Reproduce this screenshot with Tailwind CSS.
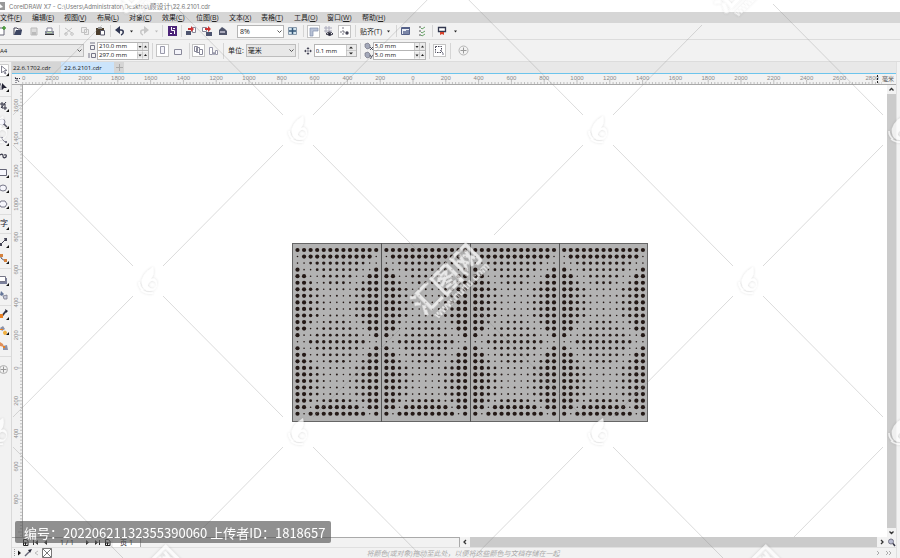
<!DOCTYPE html>
<html lang="zh-CN">
<head>
  <meta charset="UTF-8" />
  <title>CorelDRAW X7</title>
  <script src="https://cdn.jsdelivr.net/npm/@tailwindcss/browser@4"></script>
</head>
<body class="relative h-screen flex flex-col overflow-hidden bg-white text-[#333] text-[7px] leading-none font-['Open_Sans','Noto_Sans_CJK_SC',sans-serif]">

  <!-- title bar -->
  <header class="h-3 shrink-0 flex items-center gap-1 bg-white text-[#777] whitespace-nowrap">
    <svg class="w-[5px] h-2" viewBox="0 0 5 8"><path d="M0 0h5v8H0z" fill="#999" /><path d="M0 2l3 3-3 1z" fill="#fff" /></svg>
    <h1 class="text-[6px] font-['Inter','Noto_Sans_CJK_SC',sans-serif]">CorelDRAW X7 - C:\Users\Administrator\Desktop\<span class="text-[7px]">顾设计</span>\22.6.2101.cdr</h1>
  </header>

  <!-- menu -->
  <nav class="h-[11px] shrink-0 flex items-center bg-[#d6d6d6] text-[#222] whitespace-nowrap">
    <button class="w-8 text-left">文件(<u>F</u>)</button>
    <button class="w-8 text-left">编辑(<u>E</u>)</button>
    <button class="w-[33px] text-left">视图(<u>V</u>)</button>
    <button class="w-8 text-left">布局(<u>L</u>)</button>
    <button class="w-[33px] text-left">对象(<u>C</u>)</button>
    <button class="w-[34px] text-left">效果(<u>C</u>)</button>
    <button class="w-[33px] text-left">位图(<u>B</u>)</button>
    <button class="w-8 text-left">文本(<u>X</u>)</button>
    <button class="w-[33px] text-left">表格(<u>T</u>)</button>
    <button class="w-[33px] text-left">工具(<u>O</u>)</button>
    <button class="w-[35px] text-left">窗口(<u>W</u>)</button>
    <button class="w-8 text-left">帮助(<u>H</u>)</button>
  </nav>

  <!-- standard toolbar -->
  <div class="h-[17px] shrink-0 flex items-center bg-[#f2f2f2] border-b border-[#dcdcdc]">
    <button aria-label="新建" class="w-[10px] h-4 shrink-0"><svg class="w-[10px] h-4" viewBox="0 0 10 16"><path d="M0 5h4v7H0" fill="#fff" stroke="#667" /><path d="M4 3v4M2 5h4" stroke="#4a9a3c" stroke-width="1.6" /></svg></button>
    <button aria-label="打开" class="w-4 h-4 shrink-0"><svg class="w-4 h-4" viewBox="0 0 16 16"><path d="M4 12V5h3l1 1h3v2" fill="#fff" stroke="#445" /><path d="M4 12l2-5h6l-1 5z" fill="#3d4663" /></svg></button>
    <button aria-label="保存" class="w-4 h-4 shrink-0"><svg class="w-4 h-4" viewBox="0 0 16 16"><path d="M5 5h6v7H5z" fill="#ddd" stroke="#bbb" /><path d="M6 9h4v3H6z" fill="#bbb" /></svg></button>
    <button aria-label="打印" class="w-4 h-4 shrink-0"><svg class="w-4 h-4" viewBox="0 0 16 16"><path d="M5 8V5h5v3" fill="#fff" stroke="#889" /><path d="M3 8h9v4H3z" fill="#8a8f9b" /><path d="M3 11h9v1H3z" fill="#333" /><path d="M5 9h5v1H5z" fill="#b9d3a8" /></svg></button>
    <i class="w-px h-3 mx-px bg-[#d5d5d5]"></i>
    <button aria-label="剪切" class="w-4 h-4 shrink-0"><svg class="w-4 h-4" viewBox="0 0 16 16" fill="none" stroke="#c3c3c3"><path d="M4 5l7 5M4 11l7-6" /><circle cx="11" cy="11" r="1.3" /><circle cx="5" cy="11" r="1.3" /></svg></button>
    <button aria-label="复制" class="w-4 h-4 shrink-0"><svg class="w-4 h-4" viewBox="0 0 16 16" fill="#eee" stroke="#c3c3c3"><path d="M4.500 4.500h5v5h-5zM7.500 6.500h4v5h-4z" /></svg></button>
    <button aria-label="粘贴" class="w-4 h-4 shrink-0"><svg class="w-4 h-4" viewBox="0 0 16 16"><path d="M3 5h8v7H3z" fill="#4b3d2c" /><path d="M5 4h4v2H5z" fill="#999" /><path d="M7.500 7.500h4v4.500h-4z" fill="#fff" stroke="#556" /></svg></button>
    <i class="w-px h-3 mx-px bg-[#d5d5d5]"></i>
    <button aria-label="撤消" class="w-4 h-4 shrink-0"><svg class="w-4 h-4" viewBox="0 0 16 16" fill="none" stroke="#2f3652"><path d="M6 7h3c3 0 3 4 0 5" stroke-width="1.500" /><path d="M8 3L3 7l5 4z" fill="#2f3652" stroke="none" /></svg></button>
    <button aria-label="撤消列表" class="w-[7px] h-4 shrink-0"><svg class="w-[7px] h-4" viewBox="0 0 7 16"><path d="M2 7.500h3L3.500 9.500z" fill="#222" /></svg></button>
    <button aria-label="重做" class="w-[18px] h-4 shrink-0"><svg class="w-[18px] h-4" viewBox="0 0 18 16" fill="none" stroke="#c6c6c6"><path d="M10 7H8c-3 0-3 4 0 5" stroke-width="1.500" /><path d="M9 3l5 4-5 4z" fill="#c6c6c6" stroke="none" /></svg></button>
    <button aria-label="重做列表" class="w-[7px] h-4 shrink-0"><svg class="w-[7px] h-4" viewBox="0 0 7 16"><path d="M2 7.500h3L3.500 9.500z" fill="#bbb" /></svg></button>
    <i class="w-px h-3 ml-[2px] mr-px bg-[#d5d5d5]"></i>
    <button aria-label="搜索内容" class="w-4 h-4 shrink-0"><svg class="w-4 h-4" viewBox="0 0 16 16"><path d="M4 3h9v10H4z" fill="#4c2479" /><path d="M7.500 4v3.500h3V11M11 5.500H9M6 10.500h2" fill="none" stroke="#fff" /></svg></button>
    <i class="w-px h-3 mx-px bg-[#d5d5d5]"></i>
    <button aria-label="导入" class="w-4 h-4 shrink-0"><svg class="w-4 h-4" viewBox="0 0 16 16"><path d="M3 8h5v4H3z" fill="#4d546f" /><path d="M9.500 4.500h3v5h-3z" fill="#fff" stroke="#889" /><path d="M5 5h3V3l3 3-3 3V7H5z" fill="#c33" /></svg></button>
    <button aria-label="导出" class="w-4 h-4 shrink-0"><svg class="w-4 h-4" viewBox="0 0 16 16"><path d="M7 9h6v4H7z" fill="#4d546f" /><path d="M3.500 4.500h4v4h-4z" fill="#fff" stroke="#889" /><path d="M6 5h3V3l3 3-3 3V7H6z" fill="#c33" /></svg></button>
    <button aria-label="发布为PDF" class="w-4 h-4 shrink-0"><svg class="w-4 h-4" viewBox="0 0 16 16"><path d="M4 7l3-3 3 2 2 2v4H4z" fill="#50556b" /><path d="M5 8h5v2H5z" fill="#aab" /></svg></button>
    <label class="relative ml-[6px] w-[47px] h-[13px] shrink-0">
      <select aria-label="缩放级别" class="block appearance-none w-full h-full pl-[2px] bg-white border border-[#b5b5b5] text-[#222]"><option>8%</option></select>
      <svg class="absolute right-[2px] top-[4px] w-[5px] h-[5px]" viewBox="0 0 5 5" fill="none" stroke="#555"><path d="M.5 1.500l2 2 2-2" /></svg>
    </label>
    <button aria-label="全屏预览" class="w-4 h-4 shrink-0"><svg class="w-4 h-4" viewBox="0 0 16 16"><path d="M4.500 4.500h8v7h-8z" fill="#d5e5ee" stroke="#89a" /><path d="M8.500 5v6M5 8h7" stroke="#357" stroke-width="1.500" /></svg></button>
    <i class="w-px h-3 mx-[3px] bg-[#d5d5d5]"></i>
    <button aria-label="显示标尺" class="w-[13px] h-[13px] shrink-0 bg-white border border-[#c4c4c4]"><svg class="w-[11px] h-[11px]" viewBox="0 0 11 11"><path d="M2 2h8v3H5v5H2z" fill="#b8c2d6" stroke="#8290ad" stroke-width=".7" /></svg></button>
    <button aria-label="显示网格" class="w-[18px] h-4 shrink-0"><svg class="w-[18px] h-4" viewBox="0 0 18 16"><path d="M4 5h8M4 8h8M6 3v7M9 3v7" stroke="#aab" /><path d="M6 11q4-4 7 0-3 3-7 0z" fill="#fff" stroke="#334" /><circle cx="9.500" cy="11" r="1.500" fill="#223" /></svg></button>
    <button aria-label="显示辅助线" class="w-[13px] h-[13px] shrink-0 bg-white border border-[#c4c4c4]"><svg class="w-[11px] h-[11px]" viewBox="0 0 11 11"><path d="M4 1v9M1 6h5" stroke="#556" stroke-width=".8" stroke-dasharray="2 1" /><circle cx="8" cy="7" r="1.700" fill="#445" /></svg></button>
    <i class="w-px h-3 mx-1 bg-[#d5d5d5]"></i>
    <button class="h-4 shrink-0 whitespace-nowrap text-[#222]">贴齐(T)</button>
    <button aria-label="贴齐列表" class="w-[7px] h-4 ml-[3px] shrink-0"><svg class="w-[7px] h-4" viewBox="0 0 7 16"><path d="M2 7.500h3L3.500 9.500z" fill="#222" /></svg></button>
    <i class="w-px h-3 ml-1 mr-px bg-[#d5d5d5]"></i>
    <button aria-label="选项" class="w-4 h-4 shrink-0"><svg class="w-4 h-4" viewBox="0 0 16 16"><path d="M3.500 4.500h8v7h-8z" fill="#e8ecf5" stroke="#556188" /><path d="M4 4h8v2H4z" fill="#556188" /><path d="M5 8h3v3H5zM8 7h3v4H8z" fill="#7b86a8" /></svg></button>
    <button aria-label="选项列表" class="w-4 h-4 shrink-0"><svg class="w-4 h-4" viewBox="0 0 16 16" fill="none"><path d="M5 4h2M5 8h2M5 12h2" stroke="#555" /><path d="M7 5l1 1 3-2M7 9l1 1 3-2M7 12l1 1 3-2" stroke="#6aa36a" /></svg></button>
    <i class="w-px h-3 mx-[2px] bg-[#d5d5d5]"></i>
    <button aria-label="应用程序启动器" class="w-4 h-4 shrink-0"><svg class="w-4 h-4" viewBox="0 0 16 16"><path d="M3.500 4.500h7v4h-7z" fill="#fff" stroke="#33384f" stroke-width="1.300" /><path d="M5 9h4v3L7 11l-2 1z" fill="#d8432b" /></svg></button>
    <button aria-label="启动器列表" class="w-[7px] h-4 ml-px shrink-0"><svg class="w-[7px] h-4" viewBox="0 0 7 16"><path d="M2 7.500h3L3.500 9.500z" fill="#222" /></svg></button>
  </div>

  <!-- property bar -->
  <div class="h-[22px] shrink-0 flex items-center bg-[#f2f2f2] border-b border-[#dcdcdc]">
    <label class="relative w-[84px] h-[13px] shrink-0">
      <select aria-label="页面大小" class="block appearance-none w-full h-full bg-[#e8e8e8] border border-l-0 border-[#bdbdbd] text-[6px] text-[#222]"><option>A4</option></select>
      <svg class="absolute right-[2px] top-[4px] w-[5px] h-[5px]" viewBox="0 0 5 5" fill="none" stroke="#555"><path d="M.5 1.500l2 2 2-2" /></svg>
    </label>
    <svg class="ml-1 w-2 h-[18px] shrink-0" viewBox="0 0 8 18" fill="none" stroke="#778"><path d="M2.500 3.500h4v4h-4zM2 1h5M3.500 11.500h4v4h-4zM1 11v5" /></svg>
    <div class="ml-px w-[52px] shrink-0 flex flex-col">
      <div class="h-[9px] flex border border-[#b5b5b5] bg-white">
        <input aria-label="页面宽度" value="210.0 mm" class="min-w-0 flex-1 pl-px text-[6px] text-[#111]" />
        <svg class="w-[11px] h-[7px]" viewBox="0 0 11 7"><path d="M0 0h11v7H0z" fill="#eaeaea" /><path d="M5.500 0v7M.5 0v7" stroke="#bbb" stroke-width=".7" /><path d="M1.500 3h3L3 5zM7 4.500h3l-1.500-2z" fill="#222" /></svg>
      </div>
      <div class="h-[9px] flex border border-t-0 border-[#b5b5b5] bg-white">
        <input aria-label="页面高度" value="297.0 mm" class="min-w-0 flex-1 pl-px text-[6px] text-[#111]" />
        <svg class="w-[11px] h-[8px]" viewBox="0 0 11 7"><path d="M0 0h11v7H0z" fill="#eaeaea" /><path d="M5.500 0v7M.5 0v7" stroke="#bbb" stroke-width=".7" /><path d="M1.500 3h3L3 5zM7 4.500h3l-1.500-2z" fill="#222" /></svg>
      </div>
    </div>
    <i class="w-px h-4 mx-[3px] bg-[#d5d5d5]"></i>
    <button aria-label="纵向" class="w-[13px] h-[13px] shrink-0 bg-white border border-[#c4c4c4]"><svg class="w-[11px] h-[11px]" viewBox="0 0 11 11"><path d="M3.500 1.500h4v7h-4z" fill="#f4f4fa" stroke="#99a" /></svg></button>
    <button aria-label="横向" class="w-[18px] h-4 shrink-0"><svg class="w-[18px] h-4" viewBox="0 0 18 16"><path d="M5.500 6.500h7v5h-7z" fill="#f4f4fa" stroke="#889" /></svg></button>
    <i class="w-px h-4 mx-[2px] bg-[#d5d5d5]"></i>
    <button aria-label="所有页面" class="w-[13px] h-[13px] shrink-0 bg-white border border-[#c4c4c4]"><svg class="w-[11px] h-[11px]" viewBox="0 0 11 11" fill="#fff" stroke="#889"><path d="M1.500 1.500h3v5h-3zM3.500 2.500h3v5h-3zM6.500 4.500h3v5h-3z" /></svg></button>
    <button aria-label="当前页" class="w-[17px] h-4 shrink-0"><svg class="w-[17px] h-4" viewBox="0 0 17 16" fill="#fff" stroke="#99a"><path d="M4.500 4.500h3v7h-3zM8.500 9.500h1v2h-1zM10.500 7.500h2v4h-2z" /></svg></button>
    <i class="w-px h-4 mx-px bg-[#d5d5d5]"></i>
    <label for="unit" class="ml-[3px] shrink-0 whitespace-nowrap text-[#222]">单位:</label>
    <div class="relative ml-[2px] w-[50px] h-[13px] shrink-0">
      <select id="unit" class="block appearance-none w-full h-full pl-px bg-[#e8e8e8] border border-[#bdbdbd] text-[#222]"><option>毫米</option></select>
      <svg class="absolute right-[2px] top-[4px] w-[5px] h-[5px]" viewBox="0 0 5 5" fill="none" stroke="#555"><path d="M.5 1.500l2 2 2-2" /></svg>
    </div>
    <i class="w-px h-4 ml-[2px] mr-[5px] bg-[#d5d5d5]"></i>
    <svg class="w-2 h-2 shrink-0" viewBox="0 0 8 8" fill="#445"><path d="M4 0l1.500 2h-3zM4 8l1.500-2h-3zM0 4l2-1.500v3zM8 4L6 2.500v3z" /><path d="M3 3h2v2H3z" fill="none" stroke="#778" stroke-width=".7" /></svg>
    <div class="ml-[2px] w-[43px] h-[13px] shrink-0 flex border border-[#b5b5b5] bg-white">
      <input aria-label="微调距离" value="0.1 mm" class="min-w-0 flex-1 pl-px text-[6px] text-[#111]" />
      <svg class="w-[10px] h-[11px]" viewBox="0 0 10 11"><path d="M0 0h10v11H0z" fill="#eaeaea" /><path d="M0 5.500h10M.5 0v11" stroke="#bbb" stroke-width=".7" /><path d="M3 3.500h4L5 1.500zM3 7.500h4l-2 2z" fill="#222" /></svg>
    </div>
    <i class="w-px h-4 mx-[3px] bg-[#d5d5d5]"></i>
    <svg class="w-[9px] h-[18px] shrink-0" viewBox="0 0 9 18"><path d="M1 2l3-1 2 2v3L3 7 1 5zM1 11l3-1 2 2v3l-3 1-2-2z" fill="#a4a9ba" stroke="#667" stroke-width=".6" /><path d="M6 5l3 3M9 5L6 8M6 13l1.500 2L9 13M7.500 15l-1 2" stroke="#334" stroke-width=".8" fill="none" /></svg>
    <div class="w-[53px] shrink-0 flex flex-col">
      <div class="h-[9px] flex border border-[#b5b5b5] bg-white">
        <input aria-label="再制距离 X" value="5.0 mm" class="min-w-0 flex-1 pl-px text-[6px] text-[#111]" />
        <svg class="w-[11px] h-[7px]" viewBox="0 0 11 7"><path d="M0 0h11v7H0z" fill="#eaeaea" /><path d="M5.500 0v7M.5 0v7" stroke="#bbb" stroke-width=".7" /><path d="M1.500 3h3L3 5zM7 4.500h3l-1.500-2z" fill="#222" /></svg>
      </div>
      <div class="h-[9px] flex border border-t-0 border-[#b5b5b5] bg-white">
        <input aria-label="再制距离 Y" value="5.0 mm" class="min-w-0 flex-1 pl-px text-[6px] text-[#111]" />
        <svg class="w-[11px] h-[8px]" viewBox="0 0 11 7"><path d="M0 0h11v7H0z" fill="#eaeaea" /><path d="M5.500 0v7M.5 0v7" stroke="#bbb" stroke-width=".7" /><path d="M1.500 3h3L3 5zM7 4.500h3l-1.500-2z" fill="#222" /></svg>
      </div>
    </div>
    <i class="w-px h-4 mx-[3px] bg-[#d5d5d5]"></i>
    <button aria-label="视为已填充" class="w-[13px] h-[13px] shrink-0 bg-white border border-[#c4c4c4]"><svg class="w-[11px] h-[11px]" viewBox="0 0 11 11" fill="none" stroke="#445"><path d="M1.500 1.500h6v6h-6z" stroke-dasharray="1.500 1" /><path d="M6 5l3 3v2" stroke="#778" /></svg></button>
    <i class="w-px h-4 ml-1 mr-[7px] bg-[#d5d5d5]"></i>
    <button aria-label="快速自定义" class="w-[11px] h-[11px] shrink-0"><svg class="w-[11px] h-[11px]" viewBox="0 0 11 11" fill="none" stroke="#b5b5b5"><circle cx="5.500" cy="5.500" r="4.500" /><path d="M5.500 2.500v6M2.500 5.500h6" stroke="#999" /></svg></button>
  </div>

  <div class="flex-1 min-h-0 flex">

    <!-- toolbox -->
    <aside class="w-3 shrink-0 flex flex-col bg-[#f2f2f2] border-r border-[#d9d9d9]">
      <button aria-label="选择" class="h-4"><svg class="w-[11px] h-4" viewBox="0 0 11 16"><path d="M-1 2.500h9.500v12H-1z" fill="#fff" stroke="#ccc" /><path d="M1.500 4v7l2-2 1.500 3 1-.5-1.500-3H7z" fill="#fff" stroke="#667" stroke-width=".8" /><path d="M9 11v3H6z" fill="#111" /></svg></button>
      <button aria-label="形状" class="h-4"><svg class="w-[11px] h-4" viewBox="0 0 11 16"><path d="M0 5q2 3 1 7" fill="none" stroke="#667" /><path d="M2 5l5 5H4l-2 2z" fill="#223" /><path d="M9 11v3H6z" fill="#111" /></svg></button>
      <i class="h-[3px] border-b border-[#ddd]"></i>
      <button aria-label="裁剪" class="h-[17px]"><svg class="w-[11px] h-4" viewBox="0 0 11 16"><path d="M0 6h5v6M2 4v6h5M6 4L1 10" fill="none" stroke="#334" /><path d="M9 11v3H6z" fill="#111" /></svg></button>
      <button aria-label="缩放" class="h-[17px]"><svg class="w-[11px] h-4" viewBox="0 0 11 16"><circle cx="2" cy="7" r="3" fill="#eef" stroke="#889" /><path d="M4 9l3 3" stroke="#556" stroke-width="1.500" /><path d="M9 11v3H6z" fill="#111" /></svg></button>
      <button aria-label="手绘" class="h-[17px]"><svg class="w-[11px] h-4" viewBox="0 0 11 16"><path d="M0 5l6 6" stroke="#889" /><path d="M1 5h2v2H1zM5 9h2v2H5z" fill="#778" /><path d="M9 11v3H6z" fill="#111" /></svg></button>
      <button aria-label="艺术笔" class="h-4"><svg class="w-[11px] h-4" viewBox="0 0 11 16"><path d="M0 7q3-2 3 1t3 1q1-3-2-2" fill="none" stroke="#334" stroke-width="1.200" /></svg></button>
      <button aria-label="矩形" class="h-4"><svg class="w-[11px] h-4" viewBox="0 0 11 16"><path d="M-1 5.500h7.500v6H-1z" fill="#f6f6fc" stroke="#667" /><path d="M9 11v3H6z" fill="#111" /></svg></button>
      <button aria-label="椭圆形" class="h-4"><svg class="w-[11px] h-4" viewBox="0 0 11 16"><ellipse cx="3" cy="8" rx="3.500" ry="3" fill="#f6f6fc" stroke="#778" /><path d="M9 10v3H6z" fill="#111" /></svg></button>
      <button aria-label="多边形" class="h-4"><svg class="w-[11px] h-4" viewBox="0 0 11 16"><path d="M1 5h4l2 3-2 3H1L-1 8z" fill="#f6f6fc" stroke="#778" /><path d="M9 10v3H6z" fill="#111" /></svg></button>
      <i class="h-[3px] border-b border-[#ddd]"></i>
      <button aria-label="文本" class="relative h-4 text-left text-[8px] text-[#223]">字<svg class="absolute right-0 bottom-0 w-[5px] h-[5px]" viewBox="0 0 5 5"><path d="M3 1v3H0z" fill="#111" /></svg></button>
      <i class="h-[3px] border-b border-[#ddd]"></i>
      <button aria-label="平行度量" class="h-4"><svg class="w-[11px] h-4" viewBox="0 0 11 16"><path d="M0 11l6-6" stroke="#445" /><path d="M0 9h2v3H0zM4 4h3v3H5z" fill="#445" /><path d="M9 11v3H6z" fill="#111" /></svg></button>
      <button aria-label="连接器" class="h-4"><svg class="w-[11px] h-4" viewBox="0 0 11 16"><path d="M1 5v3l4 3" fill="none" stroke="#556" /><path d="M0 4h3v3H0zM4 9h3v3H4z" fill="#d4813c" /><path d="M9 11v3H6z" fill="#111" /></svg></button>
      <i class="h-[3px] border-b border-[#ddd]"></i>
      <button aria-label="阴影" class="h-[17px]"><svg class="w-[11px] h-4" viewBox="0 0 11 16"><path d="M0 8h7v6H0z" fill="#7c819c" /><path d="M-1 6.500h6.500v5H-1z" fill="#fff" stroke="#778" /><path d="M9 13v3H6z" fill="#111" /></svg></button>
      <button aria-label="透明度" class="h-[17px]"><svg class="w-[11px] h-4" viewBox="0 0 11 16"><path d="M1 4l3 3-2 2-2-1z" fill="#667799" /><path d="M3 9l4-1v4H4z" fill="#c9cddd" stroke="#778" stroke-width=".8" /></svg></button>
      <i class="h-[3px] border-b border-[#ddd]"></i>
      <button aria-label="颜色滴管" class="h-4"><svg class="w-[11px] h-4" viewBox="0 0 11 16"><path d="M2 10l4-5" stroke="#334" stroke-width="2" /><path d="M5 3l3 2-2 2z" fill="#223" /><path d="M0 8h3v4H0z" fill="#e98022" /><path d="M9 11v3H6z" fill="#111" /></svg></button>
      <button aria-label="交互式填充" class="h-4"><svg class="w-[11px] h-4" viewBox="0 0 11 16"><path d="M0 6l3-2 2 3-3 2z" fill="#8b91a8" /><path d="M0 7h3v1H0z" fill="#e98022" /><path d="M3 10q2-3 4 0 0 3-2 3t-2-3z" fill="#f0b040" /><path d="M9 10v3H6z" fill="#111" /></svg></button>
      <button aria-label="智能填充" class="h-4"><svg class="w-[11px] h-4" viewBox="0 0 11 16"><path d="M0 4l3 2 1 3-4-1z" fill="#e0905a" /><path d="M3 8l4-1 1 5H3z" fill="#8b91a8" /><path d="M3 8h2v2H3z" fill="#e98022" /></svg></button>
      <i class="h-[3px] border-b border-[#ddd]"></i>
      <button aria-label="自定义工具箱" class="h-6 flex items-center"><svg class="w-[11px] h-[11px]" viewBox="0 0 11 11" fill="none" stroke="#b0b0b0"><circle cx="3.500" cy="5.500" r="4" /><path d="M3.500 2.500v6M.5 5.500h6" stroke="#999" /></svg></button>
    </aside>

    <main class="flex-1 min-w-0 flex flex-col">
      <!-- document tabs -->
      <div class="h-3 shrink-0 flex items-stretch bg-[#e8e8e8] border-b border-[#6cc4ec] text-[6px] text-[#111]">
        <button class="w-[49px] text-left pl-px bg-[#d5d5d5]">22.6.1702.cdr</button>
        <button class="w-[53px] text-left pl-[3px] bg-[#cbe4fb]">22.6.2101.cdr</button>
        <button aria-label="新建文档" class="w-[10px] bg-[#d5d5d5] flex items-center justify-center"><svg class="w-[7px] h-[7px]" viewBox="0 0 7 7" stroke="#aaa"><path d="M3.500 0v7M0 3.500h7" /></svg></button>
      </div>

      <!-- horizontal ruler -->
      <div class="h-[11px] shrink-0 flex bg-[#f2f2f2] border-b border-[#a9a9a9]">
        <svg class="w-[10px] h-[10px] shrink-0" viewBox="0 0 10 10" fill="none" stroke="#334"><path d="M4 4v5M3 4.500h5" stroke-dasharray="1 1" /><path d="M3 3l4 5" stroke-width=".7" /></svg>
        <svg id="rulerX" class="flex-1 min-w-0 h-[10px] text-[6px] font-['Liberation_Sans',sans-serif]"></svg>
        <span class="w-[14px] shrink-0 flex items-center text-[6px] text-[#555]">毫米</span>
      </div>

      <div class="flex-1 min-h-0 flex">
        <svg id="rulerY" class="w-[10px] h-full shrink-0 bg-[#f2f2f2] text-[6px] font-['Liberation_Sans',sans-serif]"></svg>
        <div class="relative flex-1 min-w-0 bg-white border-l border-[#a9a9a9] overflow-hidden">
          <svg id="art" class="absolute left-[269px] top-[158px] w-[357px] h-[180px]" viewBox="0 0 357 180"></svg>
        </div>
        <div class="w-[9px] shrink-0 flex flex-col bg-[#cbcbcb]">
          <button aria-label="向上滚动" class="h-[9px] bg-[#f2f2f2]"><svg class="w-[9px] h-[9px]" viewBox="0 0 9 9" fill="none" stroke="#333" stroke-width="1.300"><path d="M2.500 5.500l2-2 2 2" /></svg></button>
          <span class="flex-1"></span>
          <button aria-label="向下滚动" class="h-[9px] bg-[#f2f2f2]"><svg class="w-[9px] h-[9px]" viewBox="0 0 9 9" fill="none" stroke="#333" stroke-width="1.300"><path d="M2.500 3.500l2 2 2-2" /></svg></button>
        </div>
      </div>

      <!-- page navigator and horizontal scroll bar -->
      <div class="h-[10px] shrink-0 flex bg-[#f2f2f2]">
        <div class="w-[448px] shrink-0 flex items-center border-t border-r border-[#aaa] text-[#222]">
          <button aria-label="添加页" class="ml-[9px] w-[10px]"><svg class="w-[9px] h-[9px]" viewBox="0 0 9 9" fill="none" stroke="#222"><path d="M2.500 1.500h3l1.500 2v4H2.500zM3 5h3M4.500 4v3" /></svg></button>
          <button aria-label="第一页" class="w-[10px]"><svg class="w-[9px] h-[9px]" viewBox="0 0 9 9"><path d="M2 2h1v5H2zM7 2v5L4 4.500z" fill="#333" /></svg></button>
          <button aria-label="上一页" class="w-[10px]"><svg class="w-[9px] h-[9px]" viewBox="0 0 9 9"><path d="M6 2v5L3 4.500z" fill="#333" /></svg></button>
          <span class="w-[32px] text-center">1 / 1</span>
          <button aria-label="下一页" class="w-[10px]"><svg class="w-[9px] h-[9px]" viewBox="0 0 9 9"><path d="M3 2v5l3-2.500z" fill="#333" /></svg></button>
          <button aria-label="最后一页" class="w-[10px]"><svg class="w-[9px] h-[9px]" viewBox="0 0 9 9"><path d="M6 2h1v5H6zM2 2v5l3-2.500z" fill="#333" /></svg></button>
          <button aria-label="在后面添加页" class="w-[10px]"><svg class="w-[9px] h-[9px]" viewBox="0 0 9 9" fill="none" stroke="#222"><path d="M2.500 1.500h3l1.500 2v4H2.500zM3 5h3M4.500 4v3" /></svg></button>
          <button class="w-[28px] h-full bg-white border-r border-[#aaa]">页 1</button>
        </div>
        <button aria-label="向左滚动" class="w-[10px] shrink-0"><svg class="w-[10px] h-[10px]" viewBox="0 0 10 10" fill="none" stroke="#333" stroke-width="1.300"><path d="M6 3L4 5l2 2" /></svg></button>
        <div class="flex-1 bg-[#cbcbcb]"></div>
        <button aria-label="向右滚动" class="w-[10px] shrink-0"><svg class="w-[10px] h-[10px]" viewBox="0 0 10 10" fill="none" stroke="#333" stroke-width="1.300"><path d="M4 3l2 2-2 2" /></svg></button>
        <button aria-label="导航器" class="w-[9px] shrink-0"><svg class="w-[9px] h-[10px]" viewBox="0 0 9 10"><circle cx="4" cy="4.500" r="2.500" fill="#b8bbd0" stroke="#778" /><path d="M6 6.500l2 2.500" stroke="#334" stroke-width="1.500" /></svg></button>
      </div>

      <!-- document palette -->
      <footer class="h-[11px] shrink-0 flex items-center bg-[#f2f2f2] border-t border-[#e0e0e0] text-[#aaa]">
        <svg class="w-[42px] h-[10px] shrink-0" viewBox="0 0 42 10"><path d="M2.500 1v8" stroke="#999" stroke-dasharray="1 1" /><path d="M6 2.500v5L9 5z" fill="#111" /><path d="M13 8l4-4" stroke="#667" stroke-width="1.500" /><path d="M16 2l4-1-2 4z" fill="#223" /><path d="M26 3l-3 2 3 2" fill="none" stroke="#bbb" /><path d="M30.500.5h9v9h-9zM31 1l8 8M39 1l-8 8" fill="#fff" stroke="#555" stroke-width=".8" /></svg>
        <p class="flex-1 text-center italic">将颜色(或对象)拖动至此处，以便将这些颜色与文档存储在一起</p>
        <svg class="w-[24px] h-[10px] shrink-0" viewBox="0 0 24 10" fill="none" stroke="#aaa"><path d="M5 3l2 2-2 2M14 3l2 2-2 2M17 3l2 2-2 2" /></svg>
      </footer>
    </main>

    <aside class="w-1 shrink-0 bg-[#f2f2f2] border-l border-[#e0e0e0]"></aside>
  </div>

  <!-- watermark -->
  <svg class="absolute inset-0 w-full h-full pointer-events-none" fill="none">
    <defs>
      <filter id="soft" x="-30%" y="-30%" width="160%" height="160%"><feDropShadow dx="0" dy="0" stdDeviation="1.500" flood-color="#000" flood-opacity=".22" /></filter>
      <g id="swirl" filter="url(#soft)">
        <path d="M5-14Q-8-6-6 3Q-5 10 2 10Q9 9 9 2Q8-4 3-2Q7-7 5-14Z M3 0a4 4 0 1 1-1 7Q-3 4 3 0Z" fill="#fff" fill-rule="evenodd" />
        <path d="M-9 1q0 5 4 8M-7 9q5 4 12 3" stroke="#fff" stroke-width="1.500" />
      </g>
      <g id="mark" filter="url(#soft)" transform="rotate(-45)" fill="#fff" text-anchor="middle">
        <text y="8" class="text-[28px] font-bold font-['Noto_Sans_CJK_SC',sans-serif]">汇图网</text>
        <text x="3" y="20" class="text-[10px] font-bold font-['Liberation_Sans',sans-serif]">www.huitu.com</text>
      </g>
    </defs>
    <g id="wmLines" stroke="#888" stroke-opacity=".3"></g>
    <g id="wmMarks" opacity=".7"></g>
  </svg>

  <p class="absolute left-[15px] bottom-[15px] h-[22px] pl-[9px] pr-[6px] flex items-center rounded-xs bg-[#555]/65 text-white text-[13px] whitespace-nowrap font-['Noto_Sans_CJK_SC',sans-serif]">编号：20220621132355390060 上传者ID：1818657</p>

  <script>
    const NS = 'http://www.w3.org/2000/svg';
    function add(parent, tag, attrs, text) {
      const el = document.createElementNS(NS, tag);
      for (const k in attrs) el.setAttribute(k, attrs[k]);
      if (text !== undefined) el.textContent = text;
      parent.appendChild(el);
    }

    // rulers: 200 mm is 32.8px
    const STEP = 32.8;
    const rx = document.getElementById('rulerX');
    const ry = document.getElementById('rulerY');
    let dx = '', dy = '';
    for (let i = -120; i < 145; i++) {
      const x = 391 + i * STEP / 10;
      if (x > 0) dx += `M${x.toFixed(1)} ${i % 10 ? 8 : 6}V10`;
      const y = 283 + i * STEP / 10;
      if (y > 0) dy += `M${i % 10 ? 8 : 6} ${y.toFixed(1)}H10`;
    }
    add(rx, 'path', { d: dx, stroke: '#aaa', 'stroke-width': 0.7 });
    add(ry, 'path', { d: dy, stroke: '#aaa', 'stroke-width': 0.7 });
    for (let i = -11; i <= 14; i++) {
      add(rx, 'text', { x: 391 + i * STEP, y: 6, 'text-anchor': 'middle', fill: '#8a8a8a' }, Math.abs(i * 200));
    }
    add(rx, 'text', { x: 0, y: 6, fill: '#8a8a8a' }, '0');
    add(rx, 'path', { d: 'M855.5 1V10', stroke: '#222', 'stroke-dasharray': '2 1' });
    for (let i = -8; i <= 4; i++) {
      const y = 283 + i * STEP;
      add(ry, 'text', { x: 6, y: y, 'text-anchor': 'middle', fill: '#8a8a8a', transform: `rotate(-90 6 ${y})` }, Math.abs(i * 200));
    }

    // perforated panels, left half of each row, mirrored on the middle column
    const ROWS = [
      '5555555', '1555555', '1134444', '5113333', '5511333', '5531233', '5543122',
      '5543212', '5543211', '5543212', '5543122', '5531233', '5512333', '5113333',
      '1144444', '5113333', '5512333', '5531233', '5543122', '5543212', '5543211',
      '5543212', '5543122', '5532344', '5515555', '5155555'
    ];
    const R = [0, 0.8, 1, 1.4, 1.7, 2.1];
    const art = document.getElementById('art');
    add(art, 'rect', { x: 0.5, y: 0.5, width: 355, height: 178, fill: '#b3b3b3', stroke: '#666' });
    for (let p = 0; p < 4; p++) {
      if (p) add(art, 'path', { d: `M${p * 89 + 0.5} 0V179`, stroke: '#555' });
      ROWS.forEach((row, j) => {
        for (let i = 0; i < 13; i++) {
          const size = row[i < 7 ? i : 12 - i];
          add(art, 'circle', { cx: 5.5 + p * 88.9 + i * 6.56, cy: 7 + j * 6.55, r: R[size], fill: '#231815' });
        }
      });
    }

    // watermark lattice: 'mark' is the wordmark, 'none' a bare crossing
    function kind(i, j) {
      if (j === 1) return i === 3 ? 'mark' : 'swirl';
      if (j === -1 || j === 3) return i === 3 ? 'none' : 'mark';
      return 'swirl';
    }
    const GAP = { mark: [25, 46], swirl: [15, 15], none: [0, 0] };
    const lines = document.getElementById('wmLines');
    const marks = document.getElementById('wmMarks');
    for (let j = -1; j <= 3; j++) {
      for (let i = -1; i <= 7; i++) {
        if ((i + j) % 2 !== 0) continue;
        const x = i * 150 - 2, y = 130 + j * 151;
        const k = kind(i, j);
        if (k !== 'none') add(marks, 'use', { href: '#' + k, transform: `translate(${x} ${y})` });
        const a = GAP[k];
        const b = GAP[kind(i + 1, j + 1)];
        const c = GAP[kind(i - 1, j + 1)];
        add(lines, 'path', { d: `M${x + a[0]} ${y + a[0]}L${x + 150 - b[0]} ${y + 151 - b[0]}` });
        add(lines, 'path', { d: `M${x - a[1]} ${y + a[1]}L${x - 150 + c[1]} ${y + 151 - c[1]}` });
      }
    }
  </script>
</body>
</html>
